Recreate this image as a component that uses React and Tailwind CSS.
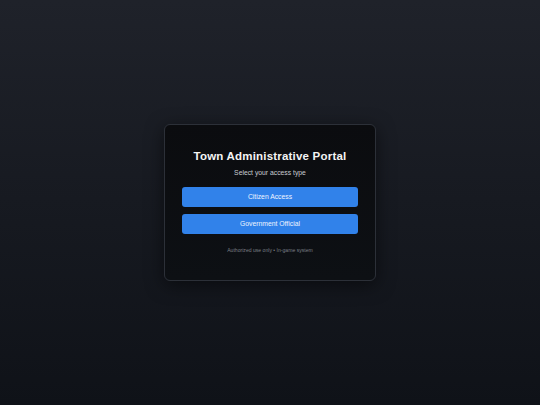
export default function App() {
  return (
    <div className="w-[540px] h-[405px] flex items-center justify-center bg-gradient-to-b from-[#1f222a] to-[#0f1218] font-['Liberation_Sans',Arial,sans-serif]">
      <div className="w-[212px] h-[157px] rounded-[6px] border border-[#2c3038] bg-gradient-to-b from-[#0b0c0f] to-[#0d1014] shadow-[0_4px_18px_rgba(0,0,0,0.5)] px-[17px] pt-[24px] flex flex-col items-center">
        <h1 className="whitespace-nowrap text-center text-[11.5px] leading-[15px] font-bold tracking-[0.2px] text-[#f4f4f4]">Town Administrative Portal</h1>
        <p className="mt-[4px] whitespace-nowrap text-[6.8px] leading-[10px] text-[#c8cbd0]">Select your access type</p>
        <button className="mt-[9px] w-full h-[20px] rounded-[3px] bg-[#3182ea] text-[6.8px] text-[#eef4ff]">Citizen Access</button>
        <button className="mt-[7px] w-full h-[20px] rounded-[3px] bg-[#3182ea] text-[6.8px] text-[#eef4ff]">Government Official</button>
        <p className="mt-[12px] whitespace-nowrap text-[5.1px] leading-[8px] text-[#7b7f86]">Authorized use only • In-game system</p>
      </div>
    </div>
  );
}
